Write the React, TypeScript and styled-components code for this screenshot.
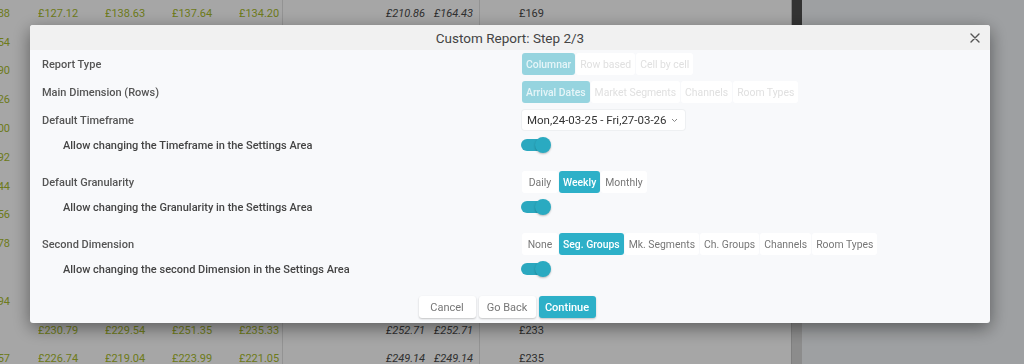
import styled, { createGlobalStyle } from "styled-components";

const GlobalStyle = createGlobalStyle`
  html, body {
    margin: 0;
    padding: 0;
    height: 364px;
    overflow: hidden;
    font-family: Roboto, "Liberation Sans", sans-serif;
  }
`;

const Page = styled.div`
  display: flex;
  height: 364px;
  background: #fff;
`;

const Table = styled.div`
  width: 791px;
  display: grid;
  grid-template-columns: 38px 67px 67px 67px 44px 148px 49px 1fr;
  grid-auto-rows: 28.8px;
  margin-top: -1px;
  font-size: 11px;
`;

const Cell = styled.div<{ $kind?: "lead" | "green" | "ital" | "plain"; $border?: boolean }>`
  display: flex;
  align-items: center;
  white-space: nowrap;
  overflow: hidden;
  justify-content: ${(p) => (p.$kind === "lead" || p.$kind === "ital" ? "flex-end" : "flex-start")};
  padding-right: ${(p) => (p.$kind === "lead" ? "28px" : p.$kind === "ital" ? "6px" : "0")};
  padding-left: ${(p) => (p.$kind === "plain" ? "39px" : "0")};
  color: ${(p) => (p.$kind === "ital" || p.$kind === "plain" ? "#4a4a4a" : "#a9bd2c")};
  font-style: ${(p) => (p.$kind === "ital" ? "italic" : "normal")};
  border-right: ${(p) => (p.$border ? "1px solid #e2e2e2" : "none")};
`;

const Scroll = styled.div`
  width: 10px;
  background: #d8d8d8;
  border-left: 1px solid #c4c4c4;
  display: flex;
  flex-direction: column;
`;

const Thumb = styled.div`
  height: 200px;
  background: #4e4e4e;
`;

const Side = styled.div`
  flex: 1;
  background: #f3f6f9;
`;

const Backdrop = styled.div`
  position: fixed;
  inset: 0;
  background: rgba(0, 0, 0, 0.35);
  display: flex;
  align-items: flex-start;
  padding: 25px 0 0 30px;
`;

const Modal = styled.div`
  width: 960px;
  background: #f8f9fb;
  border-radius: 3px;
  box-shadow: 0 5px 18px rgba(0, 0, 0, 0.45);
  overflow: hidden;
`;

const Header = styled.div`
  height: 25px;
  background: #f1f1f1;
  display: flex;
  align-items: center;
  justify-content: center;
  position: relative;
  font-size: 13.5px;
  color: #444;
`;

const Close = styled.button`
  position: absolute;
  right: 10px;
  top: 8px;
  padding: 0;
  border: 0;
  background: none;
  display: flex;
`;

const Body = styled.div`
  padding: 3px 0 0 12px;
`;

const Row = styled.div<{ $sub?: boolean }>`
  display: grid;
  grid-template-columns: 480px 1fr;
  align-items: center;
  height: 22px;
  margin-top: ${(p) => (p.$sub ? "-3px" : "0")};
  margin-bottom: ${(p) => (p.$sub ? "15px" : "6px")};
`;

const Label = styled.div<{ $sub?: boolean }>`
  font-size: 11px;
  font-weight: 500;
  color: ${(p) => (p.$sub ? "#444" : "#555")};
  padding-left: ${(p) => (p.$sub ? "21px" : "0")};
`;

const Group = styled.div`
  display: flex;
  gap: 1px;
`;

const Opt = styled.button<{ $active?: boolean; $disabled?: boolean }>`
  min-width: 36px;
  height: 22px;
  padding: 0 4px;
  border: 0;
  border-radius: 3px;
  font-family: inherit;
  font-size: 10.4px;
  font-weight: ${(p) => (p.$active ? 500 : 400)};
  background: ${(p) =>
    p.$active ? (p.$disabled ? "#96d4df" : "#2db0c8") : "#fff"};
  color: ${(p) =>
    p.$active ? (p.$disabled ? "#e6f5f8" : "#fff") : p.$disabled ? "#e0e0e0" : "#777"};
`;

const Select = styled.div`
  width: 163px;
  height: 20px;
  box-sizing: border-box;
  background: #fff;
  border-radius: 3px;
  box-shadow: 0 0 0 1px #eef0f2;
  display: flex;
  align-items: center;
  justify-content: space-between;
  padding: 0 7px 0 5px;
  font-size: 11.5px;
  color: #333;
`;

const Toggle = styled.div`
  position: relative;
  width: 30px;
  height: 16px;
  margin-left: -1px;
`;

const Track = styled.div`
  position: absolute;
  left: 0;
  top: 2px;
  width: 26px;
  height: 12px;
  border-radius: 6px;
  background: #2ba8bf;
`;

const Knob = styled.div`
  position: absolute;
  right: 0;
  top: 0;
  width: 16px;
  height: 16px;
  border-radius: 50%;
  background: #2aaac1;
  box-shadow: 0 1px 2px rgba(0, 0, 0, 0.25);
`;

const Footer = styled.div`
  display: flex;
  justify-content: center;
  gap: 3px;
  padding: 1px 0 5px 0;
  margin-left: -6px;
`;

const Btn = styled.button<{ $primary?: boolean }>`
  width: 57px;
  height: 22px;
  padding: 0;
  border: 0;
  border-radius: 3px;
  font-family: inherit;
  font-size: 11px;
  font-weight: ${(p) => (p.$primary ? 500 : 400)};
  background: ${(p) => (p.$primary ? "#2db0c8" : "#fff")};
  color: ${(p) => (p.$primary ? "#fff" : "#777")};
  box-shadow: 0 1px 2px rgba(0, 0, 0, 0.22);
`;

const lead = ["£128.88", "£133.54", "£131.90", "£129.26", "£140.00", "£132.92", "£128.44", "£129.56", "£130.78", "", "£134.94", "", "£229.57"];
const green = [
  ["£127.12", "£138.63", "£137.64", "£134.20"],
  ["£130.10", "£131.22", "£129.90", "£132.40"],
  ["£129.60", "£128.75", "£133.10", "£131.05"],
  ["£133.40", "£132.80", "£130.15", "£129.99"],
  ["£136.22", "£135.70", "£134.60", "£133.30"],
  ["£131.80", "£130.40", "£129.20", "£130.60"],
  ["£128.30", "£129.10", "£128.90", "£127.70"],
  ["£127.90", "£128.20", "£129.40", "£128.10"],
  ["£130.50", "£131.30", "£130.70", "£129.80"],
  ["£131.00", "£132.10", "£131.60", "£130.90"],
  ["£132.40", "£133.20", "£132.90", "£131.70"],
  ["£230.79", "£229.54", "£251.35", "£235.33"],
  ["£226.74", "£219.04", "£223.99", "£221.05"],
];
const ital = [
  ["£210.86", "£164.43", "£169"],
  ["£205.10", "£160.20", "£165"],
  ["£204.30", "£158.90", "£163"],
  ["£206.70", "£161.40", "£166"],
  ["£211.20", "£165.80", "£170"],
  ["£207.50", "£162.10", "£167"],
  ["£203.90", "£159.30", "£164"],
  ["£202.60", "£158.40", "£162"],
  ["£205.80", "£160.90", "£165"],
  ["£206.40", "£161.50", "£166"],
  ["£208.10", "£163.00", "£168"],
  ["£252.71", "£252.71", "£233"],
  ["£249.14", "£249.14", "£235"],
];

const CloseIcon = () => (
  <svg width="10" height="10" viewBox="0 0 10 10">
    <path d="M1 1L9 9M9 1L1 9" stroke="#555" strokeWidth="1.4" strokeLinecap="round" />
  </svg>
);

const Chevron = () => (
  <svg width="7" height="5" viewBox="0 0 7 5">
    <path d="M1 1l2.5 2.5L6 1" stroke="#888" strokeWidth="1" fill="none" />
  </svg>
);

const Switch = () => (
  <Toggle>
    <Track />
    <Knob />
  </Toggle>
);

type OptionsProps = { items: string[]; active: number; disabled?: boolean };

const Options = ({ items, active, disabled }: OptionsProps) => (
  <Group>
    {items.map((it, i) => (
      <Opt key={it} $active={i === active} $disabled={disabled}>
        {it}
      </Opt>
    ))}
  </Group>
);

export default function App() {
  return (
    <>
      <GlobalStyle />
      <Page>
        <Table>
          {lead.map((l, r) => (
            <>
              <Cell key={`l${r}`} $kind="lead">{l}</Cell>
              {green[r].map((g, c) => (
                <Cell key={`g${r}${c}`} $kind="green" $border={c === 3}>
                  {g}
                </Cell>
              ))}
              <Cell key={`a${r}`} $kind="ital">{ital[r][0]}</Cell>
              <Cell key={`b${r}`} $kind="ital" $border>{ital[r][1]}</Cell>
              <Cell key={`c${r}`} $kind="plain">{ital[r][2]}</Cell>
            </>
          ))}
        </Table>
        <Scroll>
          <Thumb />
        </Scroll>
        <Side />
      </Page>
      <Backdrop>
        <Modal>
          <Header>
            Custom Report: Step 2/3
            <Close>
              <CloseIcon />
            </Close>
          </Header>
          <Body>
            <Row>
              <Label>Report Type</Label>
              <Options items={["Columnar", "Row based", "Cell by cell"]} active={0} disabled />
            </Row>
            <Row>
              <Label>Main Dimension (Rows)</Label>
              <Options
                items={["Arrival Dates", "Market Segments", "Channels", "Room Types"]}
                active={0}
                disabled
              />
            </Row>
            <Row>
              <Label>Default Timeframe</Label>
              <Select>
                Mon,24-03-25 - Fri,27-03-26
                <Chevron />
              </Select>
            </Row>
            <Row $sub>
              <Label $sub>Allow changing the Timeframe in the Settings Area</Label>
              <Switch />
            </Row>
            <Row>
              <Label>Default Granularity</Label>
              <Options items={["Daily", "Weekly", "Monthly"]} active={1} />
            </Row>
            <Row $sub>
              <Label $sub>Allow changing the Granularity in the Settings Area</Label>
              <Switch />
            </Row>
            <Row>
              <Label>Second Dimension</Label>
              <Options
                items={["None", "Seg. Groups", "Mk. Segments", "Ch. Groups", "Channels", "Room Types"]}
                active={1}
              />
            </Row>
            <Row $sub>
              <Label $sub>Allow changing the second Dimension in the Settings Area</Label>
              <Switch />
            </Row>
          </Body>
          <Footer>
            <Btn>Cancel</Btn>
            <Btn>Go Back</Btn>
            <Btn $primary>Continue</Btn>
          </Footer>
        </Modal>
      </Backdrop>
    </>
  );
}
